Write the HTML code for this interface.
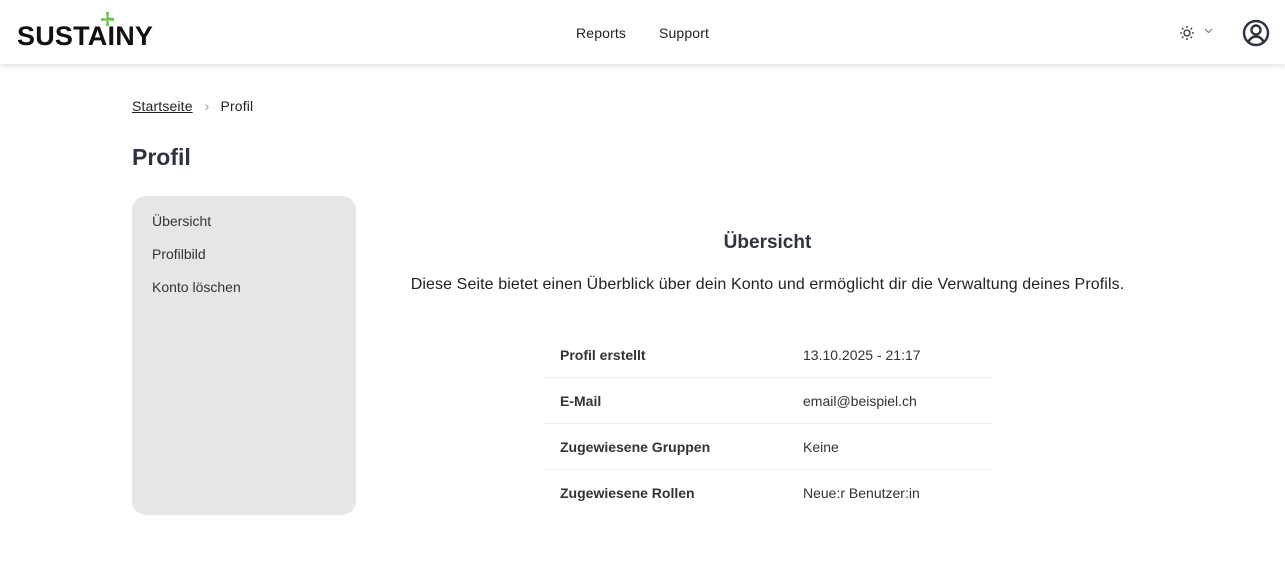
<!DOCTYPE html>
<html><head><meta charset="utf-8"><style>
body{margin:0;width:1285px;height:569px;background:#fff;font-family:"Liberation Sans",sans-serif;color:#2d3440;position:relative;overflow:hidden}
.hdr{position:absolute;left:0;top:0;width:1285px;height:64px;background:#fff;box-shadow:0 2px 6px rgba(0,0,0,.12)}
.logo{position:absolute;left:17px;top:21px;font-weight:bold;font-size:27px;letter-spacing:.2px;color:#111}
.nav{position:absolute;top:25px;font-size:14px;color:#222;letter-spacing:.15px}
.abs{position:absolute}
.side{position:absolute;left:132px;top:196px;width:224px;height:319px;background:#e6e6e6;border-radius:14px}
.side div{position:absolute;left:20px;font-size:14px;color:#333}
.row{position:absolute;left:544px;width:448px;height:46px;border-bottom:1px solid #ececec;font-size:14px}
.row b{position:absolute;left:16px;top:16px;font-weight:bold;color:#333}
.row span{position:absolute;left:259px;top:16px;color:#333}
</style></head><body>
<div class="hdr">
<div class="logo">SUSTAINY</div>
<svg class="abs" style="left:100px;top:12px" width="15" height="15" viewBox="0 0 15 15"><path d="M6 0h3l-0.5 5.5L14 6v3l-5.5-0.5L9 14H6l0.5-5.5L1 9V6l5.5 0.5z" fill="#6cc24a"/></svg>
<div class="nav" style="left:576px">Reports</div>
<div class="nav" style="left:659px">Support</div>
<svg class="abs" style="left:1179px;top:25px" width="16" height="16" viewBox="0 0 16 16" stroke="#333" stroke-width="1.3" fill="none"><circle cx="8" cy="8" r="3"/><path d="M8 1v2M8 13v2M1 8h2M13 8h2M3 3l1.4 1.4M11.6 11.6L13 13M3 13l1.4-1.4M11.6 4.4L13 3"/></svg>
<svg class="abs" style="left:1204px;top:28px" width="9" height="6" viewBox="0 0 9 6"><path d="M1 1l3.5 3.5L8 1" stroke="#777" fill="none" stroke-width="1.1"/></svg>
<svg class="abs" style="left:1242px;top:19px" width="28" height="28" viewBox="0 0 28 28" fill="none" stroke="#2d3440" stroke-width="2.4"><circle cx="14" cy="14" r="12"/><circle cx="14" cy="11" r="4.5"/><path d="M6.5 22.5c2-3.5 4.5-5 7.5-5s5.5 1.5 7.5 5"/></svg>
</div>
<div class="abs" style="left:132px;top:98px;font-size:14px;color:#222;letter-spacing:.15px"><span style="text-decoration:underline">Startseite</span><span style="color:#999;margin:0 11px 0 12px">›</span>Profil</div>
<div class="abs" style="left:132px;top:144px;font-size:23px;font-weight:bold;color:#2d3440">Profil</div>
<div class="side"><div style="top:17px">Übersicht</div><div style="top:50px">Profilbild</div><div style="top:83px">Konto löschen</div></div>
<div class="abs" style="left:356px;width:823px;top:232px;text-align:center;font-size:19px;font-weight:bold">Übersicht</div>
<div class="abs" style="left:356px;width:823px;top:276px;text-align:center;font-size:16px;color:#222;letter-spacing:.1px">Diese Seite bietet einen Überblick über dein Konto und ermöglicht dir die Verwaltung deines Profils.</div>
<div class="row" style="top:331px"><b>Profil erstellt</b><span>13.10.2025 - 21:17</span></div>
<div class="row" style="top:377px"><b>E-Mail</b><span>email@beispiel.ch</span></div>
<div class="row" style="top:423px"><b>Zugewiesene Gruppen</b><span>Keine</span></div>
<div class="row" style="top:469px;border:none"><b>Zugewiesene Rollen</b><span>Neue:r Benutzer:in</span></div>
</body></html>
